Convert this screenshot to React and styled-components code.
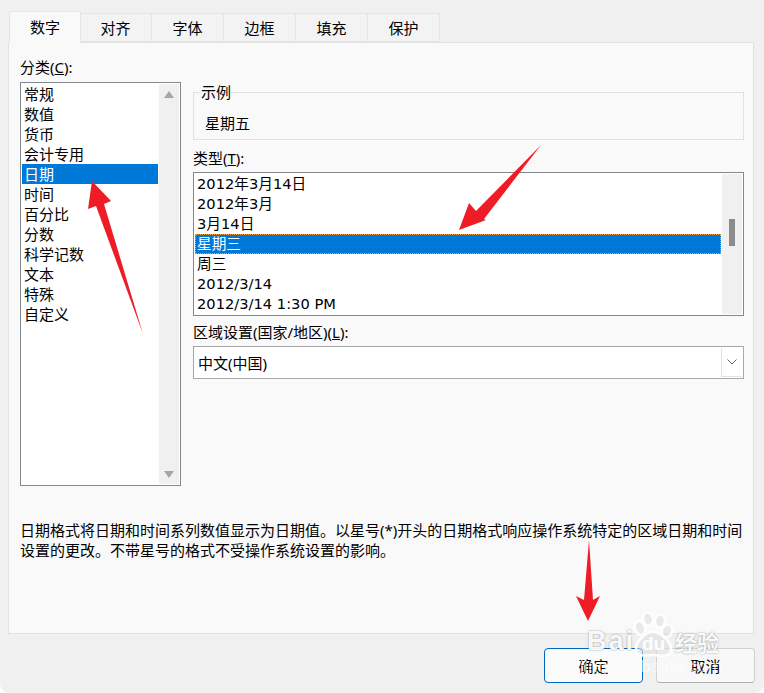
import React from "react";
import styled, { createGlobalStyle } from "styled-components";

const Global = createGlobalStyle`
  html, body {
    margin: 0;
    padding: 0;
    background: #ffffff;
  }
  body {
    font-family: "Noto Sans", "Noto Sans CJK SC", sans-serif;
    font-size: 15px;
    line-height: 20px;
    color: #000;
  }
`;

const Dialog = styled.div`
  position: relative;
  width: 764px;
  height: 693px;
  overflow: hidden;
  background: #f0f0f0;
  border-radius: 0 0 9px 9px;
`;

const TabStrip = styled.div`
  display: flex;
  align-items: flex-end;
  height: 42px;
  padding-left: 9px;
`;

const Tab = styled.div`
  width: 72px;
  height: ${p => (p.$active ? "32px" : "29px")};
  margin-left: ${p => (p.$first ? "-1px" : "0")};
  margin-bottom: ${p => (p.$active ? "-1px" : "0")};
  display: flex;
  align-items: center;
  justify-content: center;
  padding-bottom: ${p => (p.$active ? "2px" : "0")};
  box-sizing: border-box;
  background: ${p => (p.$active ? "#f9f9f9" : "#f3f3f3")};
  border: 1px solid #e5e5e5;
  border-left: ${p => (p.$active ? "1px solid #e5e5e5" : "none")};
  border-bottom: ${p => (p.$active ? "none" : "1px solid #e5e5e5")};
  position: relative;
  z-index: ${p => (p.$active ? 1 : 0)};
`;

const Panel = styled.div`
  box-sizing: border-box;
  width: 746px;
  height: 592px;
  margin-left: 8px;
  padding: 14px 9px 0 11px;
  background: #f9f9f9;
  border: 1px solid #e2e2e2;
`;

const Columns = styled.div`
  display: flex;
  gap: 12px;
`;

const LeftColumn = styled.div`
  width: 161px;
  display: flex;
  flex-direction: column;
`;

const RightColumn = styled.div`
  width: 551px;
  display: flex;
  flex-direction: column;
  padding-top: 25px;
`;

const Label = styled.div`
  height: 20px;
  white-space: nowrap;
  margin-bottom: ${p => p.$gap || 5}px;
  margin-top: ${p => p.$top || 0}px;
`;

const ListBox = styled.div`
  box-sizing: border-box;
  height: ${p => p.$height}px;
  padding: 1px;
  display: flex;
  background: #fff;
  border: 1px solid #828790;
`;

const Items = styled.div`
  flex: 1;
  min-width: 0;
  font-family: ${p => (p.$wideDigits ? '"DejaVu Sans", "Noto Sans CJK SC", sans-serif' : "inherit")};
  font-size: ${p => (p.$wideDigits ? "14.67px" : "inherit")};
`;

const Item = styled.div`
  height: 20px;
  padding-left: ${p => p.$indent}px;
  white-space: nowrap;
  box-sizing: border-box;
  background: ${p => (p.$selected ? "#0078d7" : "transparent")};
  color: ${p => (p.$selected ? "#fff" : "#000")};
  outline: ${p => (p.$focus ? "1px dotted #f0a040" : "none")};
  outline-offset: -1px;
`;

const Track = styled.div`
  width: 20px;
  margin-left: 1px;
  display: flex;
  flex-direction: column;
  align-items: center;
  justify-content: space-between;
  padding: 7px 0 6px;
  box-sizing: border-box;
  background: #f0f0f0;
  position: relative;
`;

const Triangle = styled.div`
  width: 0;
  height: 0;
  border-left: 5px solid transparent;
  border-right: 5px solid transparent;
  border-${p => (p.$down ? "top" : "bottom")}: 7px solid #a6a6a6;
`;

const Thumb = styled.div`
  position: absolute;
  left: 7px;
  top: 45px;
  width: 6px;
  height: 27px;
  background: #8c8c8c;
`;

const Group = styled.fieldset`
  box-sizing: border-box;
  height: 58px;
  width: 551px;
  margin: 0;
  padding: 0 0 0 11px;
  border: 1px solid #e1e1e1;
`;

const Legend = styled.legend`
  margin-left: -4px;
  padding: 0;
  height: 20px;
`;

const Sample = styled.div`
  height: 20px;
  margin-top: 11px;
`;

const Select = styled.div`
  box-sizing: border-box;
  height: 33px;
  display: flex;
  align-items: center;
  justify-content: space-between;
  padding: 1px;
  padding-left: 4px;
  background: #fff;
  border: 1px solid #a8a8a8;
`;

const SelectButton = styled.div`
  box-sizing: border-box;
  width: 21px;
  height: 100%;
  display: flex;
  align-items: center;
  justify-content: center;
  background: #fff;
  border-left: 1px solid #e3e3e3;
  border-bottom: 1px solid #e3e3e3;
`;

const Description = styled.div`
  margin-top: 34px;
  white-space: pre;
`;

const Footer = styled.div`
  display: flex;
  justify-content: flex-end;
  gap: 13px;
  padding: 14px 9px 0 0;
`;

const Button = styled.div`
  box-sizing: border-box;
  width: 99px;
  height: 35px;
  display: flex;
  align-items: center;
  justify-content: center;
  background: ${p => (p.$primary ? "#fbfbfb" : "#f8f8f8")};
  border: 1px solid ${p => (p.$primary ? "#0067c0" : "#d0d0d0")};
  border-bottom-color: ${p => (p.$primary ? "#0067c0" : "#b0b0b0")};
  border-radius: 4px;
`;

const Overlay = styled.svg`
  position: absolute;
  left: 0;
  top: 0;
  pointer-events: none;
`;

const Watermark = styled.div`
  position: absolute;
  left: 586px;
  top: 612px;
  width: 140px;
  height: 76px;
  pointer-events: none;
  color: rgba(255, 255, 255, 0.95);
`;

const WatermarkMark = styled.svg`
  position: absolute;
  left: 0;
  top: 0;
`;

const WatermarkBrand = styled.span`
  position: absolute;
  left: 1px;
  top: 12px;
  font: 700 27px/34px "Liberation Sans", sans-serif;
  letter-spacing: 2px;
  text-shadow: 0 0 2px rgba(0, 0, 0, 0.4);
`;

const WatermarkDu = styled.span`
  position: absolute;
  left: 56px;
  top: 18px;
  font: 700 19px/28px "Liberation Sans", sans-serif;
`;

const WatermarkName = styled.span`
  position: absolute;
  left: 89px;
  top: 16px;
  font: 700 22px/26px "Noto Sans CJK SC", sans-serif;
  text-shadow: 0 0 2px rgba(0, 0, 0, 0.4);
`;

const WatermarkUrl = styled.span`
  position: absolute;
  left: -6px;
  top: 45px;
  font: 400 17px/20px "Liberation Sans", sans-serif;
  letter-spacing: 0.3px;
  color: rgba(255, 255, 255, 0.65);
  white-space: nowrap;
`;

const tabs = ["数字", "对齐", "字体", "边框", "填充", "保护"];
const categories = ["常规", "数值", "货币", "会计专用", "日期", "时间", "百分比", "分数", "科学记数", "文本", "特殊", "自定义"];
const types = ["2012年3月14日", "2012年3月", "3月14日", "星期三", "周三", "2012/3/14", "2012/3/14 1:30 PM"];

const arrows = [
  "92,181 111,201 104,204 143,334 96,206 88,209",
  "541,145 484,219 486,220 459,230 469,203 476,211",
  "589,540 593,600 600,596 588,621 576,596 584,600",
];

const App = () => {
  return (
    <Dialog>
      <Global />
      <TabStrip>
        {tabs.map((t, i) => (
          <Tab key={t} $active={i === 0} $first={i === 1}>{t}</Tab>
        ))}
      </TabStrip>
      <Panel>
        <Columns>
          <LeftColumn>
            <Label>分类(<u>C</u>):</Label>
            <ListBox $height={404}>
              <Items>
                {categories.map(c => (
                  <Item key={c} $indent={2} $selected={c === "日期"}>{c}</Item>
                ))}
              </Items>
              <Track>
                <Triangle />
                <Triangle $down />
              </Track>
            </ListBox>
          </LeftColumn>
          <RightColumn>
            <Group>
              <Legend>示例</Legend>
              <Sample>星期五</Sample>
            </Group>
            <Label $top={8} $gap={4}>类型(<u>T</u>):</Label>
            <ListBox $height={144}>
              <Items $wideDigits>
                {types.map(t => (
                  <Item key={t} $indent={2} $selected={t === "星期三"} $focus={t === "星期三"}>{t}</Item>
                ))}
              </Items>
              <Track>
                <Thumb />
              </Track>
            </ListBox>
            <Label $top={6} $gap={4}>区域设置(国家/地区)(<u>L</u>):</Label>
            <Select>
              <span>中文(中国)</span>
              <SelectButton>
                <svg width="10" height="6" viewBox="0 0 10 6">
                  <path d="M0.5 0.5 L5 5 L9.5 0.5" fill="none" stroke="#606060" strokeWidth="1" />
                </svg>
              </SelectButton>
            </Select>
          </RightColumn>
        </Columns>
        <Description>
          日期格式将日期和时间系列数值显示为日期值。以星号(*)开头的日期格式响应操作系统特定的区域日期和时间{"\n"}
          设置的更改。不带星号的格式不受操作系统设置的影响。
        </Description>
      </Panel>
      <Footer>
        <Button $primary>确定</Button>
        <Button>取消</Button>
      </Footer>
      <Overlay width="764" height="693" viewBox="0 0 764 693">
        {arrows.map(points => (
          <polygon key={points} points={points} fill="#ee1c25" />
        ))}
      </Overlay>
      <Watermark>
        <WatermarkMark width="140" height="50" viewBox="0 0 140 50">
          <g fill="rgba(222,222,222,0.55)" stroke="rgba(255,255,255,0.9)" strokeWidth="2.5">
            <ellipse cx="54" cy="16" rx="5" ry="7" transform="rotate(-20 54 16)" />
            <ellipse cx="62" cy="7" rx="5" ry="6.5" transform="rotate(-10 62 7)" />
            <ellipse cx="74" cy="9" rx="5" ry="6.5" transform="rotate(10 74 9)" />
            <ellipse cx="81" cy="19" rx="5" ry="6.5" transform="rotate(20 81 19)" />
            <path d="M50 37 C50 29 60 20 67 20 C74 20 86 30 85 38 C84 45 76 44 67 43 C58 44 50 45 50 37 Z" />
          </g>
        </WatermarkMark>
        <WatermarkBrand>Bai</WatermarkBrand>
        <WatermarkDu>du</WatermarkDu>
        <WatermarkName>经验</WatermarkName>
        <WatermarkUrl>jingyan.baidu.com</WatermarkUrl>
      </Watermark>
    </Dialog>
  );
};

export default App;
